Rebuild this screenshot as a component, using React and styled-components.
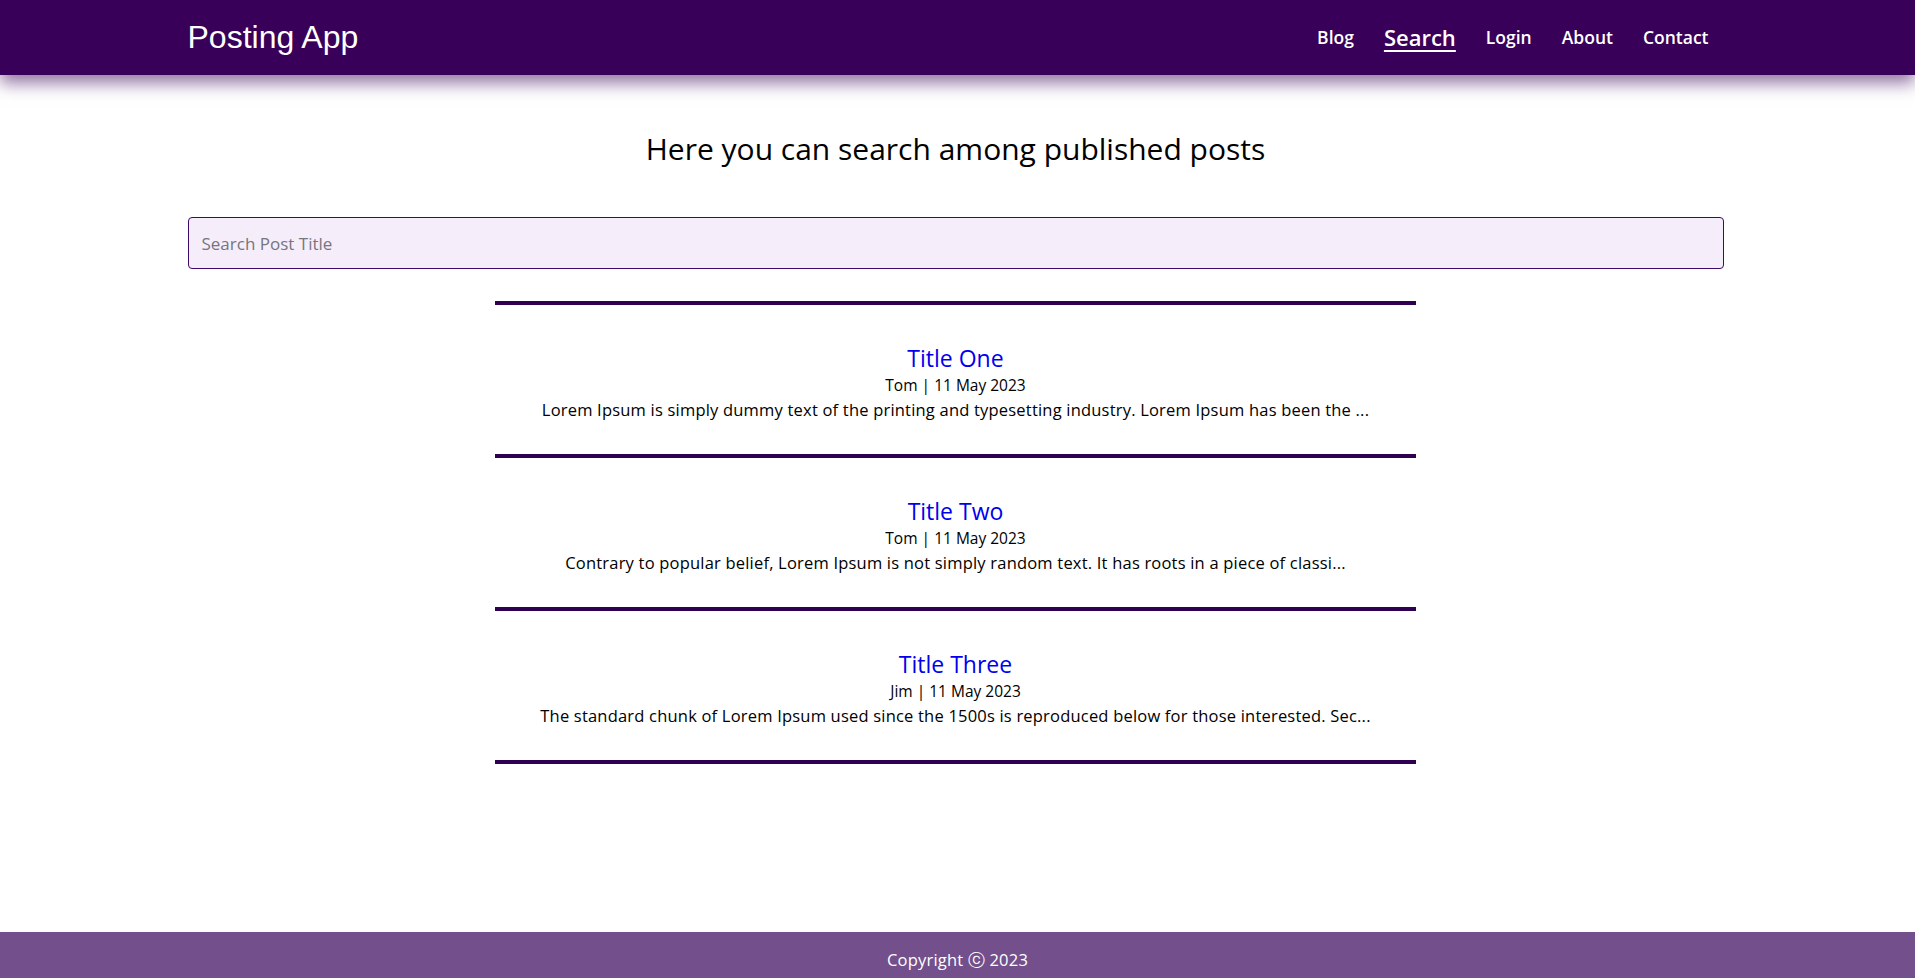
import React from 'react';
import styled, { createGlobalStyle } from 'styled-components';

const GlobalStyle = createGlobalStyle`
  * {
    box-sizing: border-box;
  }
  body {
    margin: 0;
    font-family: 'Open Sans', 'Noto Sans', sans-serif;
    background: #ffffff;
    color: #000000;
  }
`;

const Page = styled.div`
  min-height: 100vh;
  display: flex;
  flex-direction: column;
`;

const Container = styled.div`
  width: calc(80% + 4px);
  margin-left: calc(10% - 4px);
`;

const Header = styled.header`
  height: 75px;
  background-color: #380058;
  box-shadow: 0 8px 16px rgba(56, 0, 88, 0.55);
  position: relative;
  z-index: 1;
`;

const HeaderInner = styled(Container)`
  height: 100%;
  display: flex;
  align-items: center;
  justify-content: space-between;
`;

const Logo = styled.div`
  font-family: 'Liberation Sans', Arial, sans-serif;
  font-size: 32px;
  color: #ffffff;
`;

const NavList = styled.ul`
  list-style: none;
  margin: 0 0 2px;
  padding: 0;
  display: flex;
  align-items: center;
`;

const NavItem = styled.li`
  padding: 0 15px;
`;

const NavLink = styled.a`
  font-weight: 600;
  color: #ffffff;
  text-decoration: ${(p) => (p.$active ? 'underline' : 'none')};
  text-underline-offset: 4px;
  text-decoration-thickness: 2px;
  font-size: ${(p) => (p.$active ? '22px' : '17.5px')};
  cursor: pointer;
`;

const Main = styled(Container)`
  flex: 1;
  padding-bottom: 60px;
`;

const Heading = styled.h1`
  font-weight: 400;
  font-size: 30px;
  line-height: 34px;
  text-align: center;
  margin: 57px 0 51px;
`;

const SearchInput = styled.input`
  display: block;
  width: 100%;
  height: 52px;
  padding: 0 13px;
  background-color: #f5eefa;
  border: 1px solid #3a0b6a;
  border-radius: 4px;
  font-family: 'Open Sans', sans-serif;
  font-size: 17px;
  color: #333;
  outline: none;
  &::placeholder {
    color: #777580;
  }
`;

const PostList = styled.div`
  width: 60%;
  margin: 32px auto 0;
  border-top: 4px solid #2f0052;
`;

const Post = styled.article`
  padding: 38px 0 32px;
  border-bottom: 4px solid #2f0052;
  text-align: center;
`;

const PostTitle = styled.a`
  display: block;
  font-size: 23px;
  line-height: 30px;
  color: #0000ee;
  text-decoration: none;
`;

const PostMeta = styled.div`
  font-size: 15.5px;
  line-height: 24px;
`;

const PostText = styled.p`
  margin: 0;
  font-size: 16.5px;
  letter-spacing: 0.2px;
  line-height: 25px;
`;

const Footer = styled.footer`
  height: 46px;
  padding-top: 18px;
  background-color: #734f8b;
  color: #ffffff;
  text-align: center;
  font-size: 16.5px;
  letter-spacing: 0.2px;
  line-height: 20px;
`;

const posts = [
  {
    title: 'Title One',
    author: 'Tom',
    date: '11 May 2023',
    text: 'Lorem Ipsum is simply dummy text of the printing and typesetting industry. Lorem Ipsum has been the ...',
  },
  {
    title: 'Title Two',
    author: 'Tom',
    date: '11 May 2023',
    text: 'Contrary to popular belief, Lorem Ipsum is not simply random text. It has roots in a piece of classi...',
  },
  {
    title: 'Title Three',
    author: 'Jim',
    date: '11 May 2023',
    text: 'The standard chunk of Lorem Ipsum used since the 1500s is reproduced below for those interested. Sec...',
  },
];

const links = ['Blog', 'Search', 'Login', 'About', 'Contact'];

export default function App() {
  return (
    <Page>
      <GlobalStyle />
      <Header>
        <HeaderInner>
          <Logo>Posting App</Logo>
          <nav>
            <NavList>
              {links.map((l) => (
                <NavItem key={l}>
                  <NavLink $active={l === 'Search'}>{l}</NavLink>
                </NavItem>
              ))}
            </NavList>
          </nav>
        </HeaderInner>
      </Header>
      <Main>
        <Heading>Here you can search among published posts</Heading>
        <SearchInput type="text" placeholder="Search Post Title" />
        <PostList>
          {posts.map((p) => (
            <Post key={p.title}>
              <PostTitle>{p.title}</PostTitle>
              <PostMeta>
                {p.author} | {p.date}
              </PostMeta>
              <PostText>{p.text}</PostText>
            </Post>
          ))}
        </PostList>
      </Main>
      <Footer>Copyright ⓒ 2023</Footer>
    </Page>
  );
}
